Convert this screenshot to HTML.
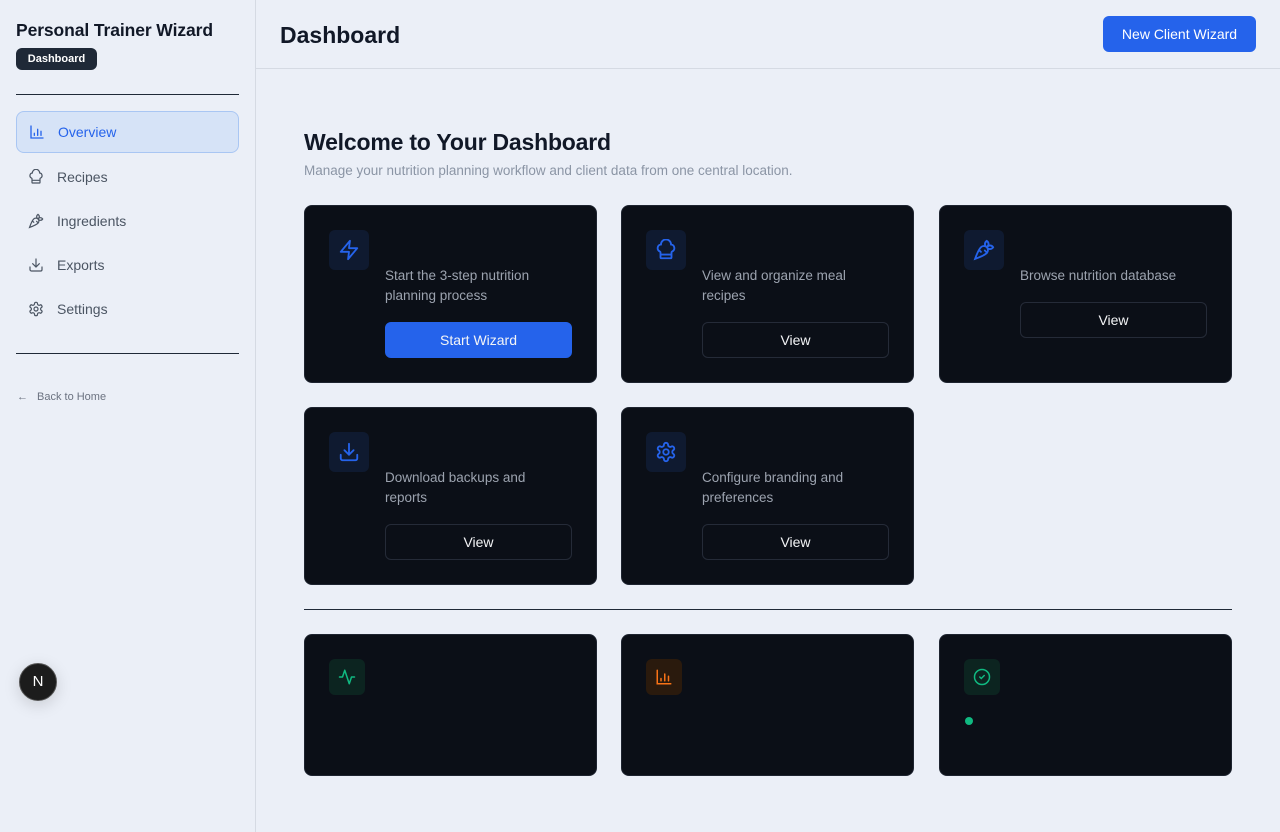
<!DOCTYPE html>
<html><head><meta charset="utf-8"><style>
*{box-sizing:border-box;margin:0;padding:0}
body{width:1280px;height:832px;background:#ebeff7;font-family:"Liberation Sans",sans-serif;position:relative;overflow:hidden;color:#111827}
.side{position:absolute;left:0;top:0;width:256px;height:832px;border-right:1px solid #d5dae3}
.side h1{position:absolute;left:16px;top:20px;font-size:17.5px;font-weight:bold;color:#111827;letter-spacing:-0.1px}
.badge{position:absolute;left:16px;top:48px;width:81px;height:22px;background:#1f2937;color:#fff;border-radius:6px;font-size:11px;font-weight:bold;text-align:center;line-height:22px}
.hr{position:absolute;left:16px;width:223px;height:1px;background:#1f2937}
.nav{position:absolute;left:16px;width:223px;height:42px;display:flex;align-items:center;padding-left:12px;font-size:14px;color:#4b5563}
.nav svg{width:16px;height:16px;margin-right:13px}
.nav.act{background:#d6e3f7;border:1px solid #a9c6f3;border-radius:8px;color:#2563eb}
.back{position:absolute;left:17px;top:391px;font-size:11px;color:#6b7280;display:flex;align-items:center}
.hdr{position:absolute;left:256px;top:0;right:0;height:69px;border-bottom:1px solid #d5dae3}
.hdr h2{position:absolute;left:24px;top:22px;font-size:23px;font-weight:bold}
.nbtn{position:absolute;right:24px;top:16px;width:153px;height:36px;background:#2563eb;color:#fff;border-radius:6px;font-size:14px;text-align:center;line-height:36px}
.wt{position:absolute;left:304px;top:129px;font-size:23px;font-weight:bold;letter-spacing:-0.2px}
.ws{position:absolute;left:304px;top:163px;font-size:13.5px;color:#8b95a5}
.card{position:absolute;width:293px;background:#0b0f17;border-radius:8px;border:1px solid #1e2430}
.ib{position:absolute;left:24px;top:24px;width:40px;height:40px;border-radius:6px;background:#0f1a30;display:flex;align-items:center;justify-content:center}
.ib svg{width:22px;height:22px}
.txt{position:absolute;left:80px;top:60px;width:180px;font-size:13.5px;line-height:20px;color:#9ca3af}
.btn{position:absolute;left:80px;top:116px;width:187px;height:36px;border-radius:6px;border:1px solid #252b38;color:#f3f4f6;font-size:14px;text-align:center;line-height:34px}
.btn.p{background:#2563eb;border-color:#2563eb}
.div{position:absolute;left:304px;top:609px;width:928px;height:1px;background:#1f2937}
.sb{position:absolute;left:24px;top:24px;width:36px;height:36px;border-radius:6px;display:flex;align-items:center;justify-content:center}
.sb svg{width:18px;height:18px}
.nx{position:absolute;left:19px;top:663px;width:38px;height:38px;border-radius:50%;background:#1c1c1c;border:1px solid #555;color:#fff;font-size:15px;text-align:center;line-height:36px;box-shadow:0 4px 16px rgba(0,0,0,.15)}
</style></head><body>
<div class="side">
<h1>Personal Trainer Wizard</h1>
<div class="badge">Dashboard</div>
<div class="hr" style="top:94px"></div>
<div class="nav act" style="top:111px"><svg viewBox="0 0 24 24" fill="none" stroke="currentColor" stroke-width="2" stroke-linecap="round"><path d="M3 3v18h18M8 17v-3M13 17V8M18 17v-6"/></svg>Overview</div>
<div class="nav" style="top:156px"><svg viewBox="0 0 24 24" fill="none" stroke="currentColor" stroke-width="1.8" stroke-linecap="round"><path d="M17 21a1 1 0 0 0 1-1v-5.35c0-.46.32-.85.74-1.03A4 4 0 0 0 17.5 6a5 5 0 0 0-11 0 4 4 0 0 0-1.24 7.62c.42.18.74.57.74 1.03V20a1 1 0 0 0 1 1zM6 17h12"/></svg>Recipes</div>
<div class="nav" style="top:200px"><svg viewBox="0 0 24 24" fill="none" stroke="currentColor" stroke-width="1.8" stroke-linecap="round"><path d="M2.27 21.7s9.87-3.5 12.73-6.36a4.5 4.5 0 0 0-6.36-6.37C5.77 11.84 2.27 21.7 2.27 21.7zM8.64 14l-2.05-2.04M15.34 15l-2.46-2.46M22 9s-1.330-2-3.5-2C16.86 7 15 9 15 9s1.33 2 3.5 2S22 9 22 9zM15 2s-2 1.33-2 3.5S15 9 15 9s2-1.84 2-3.5C17 3.33 15 2 15 2z"/></svg>Ingredients</div>
<div class="nav" style="top:244px"><svg viewBox="0 0 24 24" fill="none" stroke="currentColor" stroke-width="1.8" stroke-linecap="round"><path d="M21 15v4a2 2 0 0 1-2 2H5a2 2 0 0 1-2-2v-4M7 10l5 5 5-5M12 15V3"/></svg>Exports</div>
<div class="nav" style="top:288px"><svg viewBox="0 0 24 24" fill="none" stroke="currentColor" stroke-width="1.8"><circle cx="12" cy="12" r="3"/><path d="M12.22 2h-.44a2 2 0 0 0-2 2v.18a2 2 0 0 1-1 1.73l-.43.25a2 2 0 0 1-2 0l-.15-.08a2 2 0 0 0-2.73.73l-.22.38a2 2 0 0 0 .73 2.73l.15.1a2 2 0 0 1 1 1.72v.51a2 2 0 0 1-1 1.74l-.15.09a2 2 0 0 0-.73 2.73l.22.38a2 2 0 0 0 2.73.73l.15-.08a2 2 0 0 1 2 0l.43.25a2 2 0 0 1 1 1.73V20a2 2 0 0 0 2 2h.44a2 2 0 0 0 2-2v-.18a2 2 0 0 1 1-1.73l.43-.25a2 2 0 0 1 2 0l.15.08a2 2 0 0 0 2.730-.73l.22-.39a2 2 0 0 0-.73-2.73l-.15-.08a2 2 0 0 1-1-1.74v-.5a2 2 0 0 1 1-1.74l.15-.09a2 2 0 0 0 .73-2.73l-.22-.38a2 2 0 0 0-2.73-.73l-.15.08a2 2 0 0 1-2 0l-.43-.25a2 2 0 0 1-1-1.73V4a2 2 0 0 0-2-2z"/></svg>Settings</div>
<div class="hr" style="top:353px"></div>
<div class="back"><span style="margin-right:9px">←</span>Back to Home</div>
</div>
<div class="nx">N</div>
<div class="hdr"><h2>Dashboard</h2><div class="nbtn">New Client Wizard</div></div>
<div class="wt">Welcome to Your Dashboard</div>
<div class="ws">Manage your nutrition planning workflow and client data from one central location.</div>

<div class="card" style="left:304px;top:205px;height:178px"><div class="ib"><svg viewBox="0 0 24 24" fill="none" stroke="#2563eb" stroke-width="2" stroke-linejoin="round"><path d="M13 2 3 14h9l-1 8 10-12h-9l1-8z"/></svg></div><div class="txt">Start the 3-step nutrition planning process</div><div class="btn p">Start Wizard</div></div>
<div class="card" style="left:621px;top:205px;height:178px"><div class="ib"><svg viewBox="0 0 24 24" fill="none" stroke="#2563eb" stroke-width="2"><path d="M17 21a1 1 0 0 0 1-1v-5.35c0-.46.32-.85.74-1.03A4 4 0 0 0 17.5 6a5 5 0 0 0-11 0 4 4 0 0 0-1.24 7.62c.42.18.74.57.74 1.03V20a1 1 0 0 0 1 1zM6 17h12"/></svg></div><div class="txt">View and organize meal recipes</div><div class="btn">View</div></div>
<div class="card" style="left:939px;top:205px;height:178px"><div class="ib"><svg viewBox="0 0 24 24" fill="none" stroke="#2563eb" stroke-width="2" stroke-linecap="round"><path d="M2.27 21.7s9.87-3.5 12.73-6.36a4.5 4.5 0 0 0-6.36-6.37C5.77 11.84 2.27 21.7 2.27 21.7zM8.64 14l-2.05-2.04M15.34 15l-2.46-2.46M22 9s-1.33-2-3.5-2C16.86 7 15 9 15 9s1.33 2 3.5 2S22 9 22 9zM15 2s-2 1.33-2 3.5S15 9 15 9s2-1.84 2-3.5C17 3.33 15 2 15 2z"/></svg></div><div class="txt">Browse nutrition database</div><div class="btn" style="top:96px">View</div></div>
<div class="card" style="left:304px;top:407px;height:178px"><div class="ib"><svg viewBox="0 0 24 24" fill="none" stroke="#2563eb" stroke-width="2" stroke-linecap="round"><path d="M21 15v4a2 2 0 0 1-2 2H5a2 2 0 0 1-2-2v-4M7 10l5 5 5-5M12 15V3"/></svg></div><div class="txt">Download backups and reports</div><div class="btn">View</div></div>
<div class="card" style="left:621px;top:407px;height:178px"><div class="ib"><svg viewBox="0 0 24 24" fill="none" stroke="#2563eb" stroke-width="2"><circle cx="12" cy="12" r="3"/><path d="M12.22 2h-.44a2 2 0 0 0-2 2v.18a2 2 0 0 1-1 1.73l-.43.25a2 2 0 0 1-2 0l-.15-.08a2 2 0 0 0-2.73.73l-.22.38a2 2 0 0 0 .73 2.73l.15.1a2 2 0 0 1 1 1.72v.51a2 2 0 0 1-1 1.74l-.15.09a2 2 0 0 0-.73 2.73l.22.38a2 2 0 0 0 2.73.73l.15-.08a2 2 0 0 1 2 0l.43.25a2 2 0 0 1 1 1.73V20a2 2 0 0 0 2 2h.44a2 2 0 0 0 2-2v-.18a2 2 0 0 1 1-1.73l.43-.25a2 2 0 0 1 2 0l.15.08a2 2 0 0 0 2.73-.73l.22-.39a2 2 0 0 0-.73-2.73l-.15-.08a2 2 0 0 1-1-1.74v-.5a2 2 0 0 1 1-1.74l.15-.09a2 2 0 0 0 .73-2.73l-.22-.38a2 2 0 0 0-2.73-.73l-.15.08a2 2 0 0 1-2 0l-.43-.25a2 2 0 0 1-1-1.73V4a2 2 0 0 0-2-2z"/></svg></div><div class="txt">Configure branding and preferences</div><div class="btn">View</div></div>

<div class="div"></div>
<div class="card" style="left:304px;top:634px;height:142px"><div class="sb" style="background:#0c2420"><svg viewBox="0 0 24 24" fill="none" stroke="#10b981" stroke-width="2" stroke-linecap="round" stroke-linejoin="round"><path d="M22 12h-4l-3 9L9 3l-3 9H2"/></svg></div></div>
<div class="card" style="left:621px;top:634px;height:142px"><div class="sb" style="background:#2a1a0d"><svg viewBox="0 0 24 24" fill="none" stroke="#f97316" stroke-width="2" stroke-linecap="round"><path d="M3 3v18h18M8 17v-3M13 17V8M18 17v-6"/></svg></div></div>
<div class="card" style="left:939px;top:634px;height:142px"><div class="sb" style="background:#0c2420"><svg viewBox="0 0 24 24" fill="none" stroke="#10b981" stroke-width="2" stroke-linecap="round"><circle cx="12" cy="12" r="10"/><path d="m9 12 2 2 4-4"/></svg></div><div style="position:absolute;left:25px;top:82px;width:8px;height:8px;border-radius:50%;background:#10b981"></div></div>
</body></html>
